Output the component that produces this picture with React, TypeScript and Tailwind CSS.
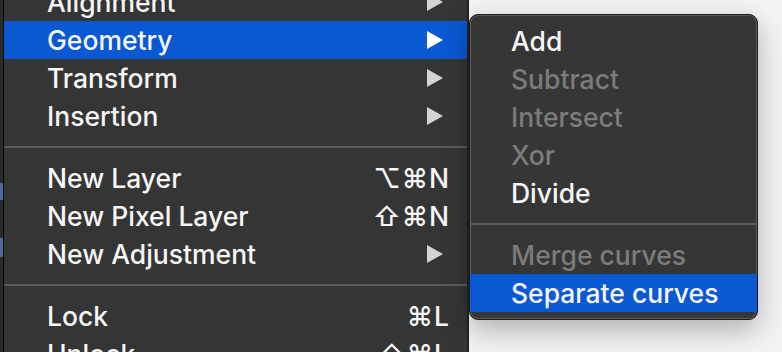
import React from "react";

type Item =
  | { kind: "item"; label: string; shortcut?: string; sub?: boolean; active?: boolean; disabled?: boolean }
  | { kind: "sep" };

const mainItems: Item[] = [
  { kind: "item", label: "Alignment", sub: true },
  { kind: "item", label: "Geometry", sub: true, active: true },
  { kind: "item", label: "Transform", sub: true },
  { kind: "item", label: "Insertion", sub: true },
  { kind: "sep" },
  { kind: "item", label: "New Layer", shortcut: "⌥⌘N" },
  { kind: "item", label: "New Pixel Layer", shortcut: "⇧⌘N" },
  { kind: "item", label: "New Adjustment", sub: true },
  { kind: "sep" },
  { kind: "item", label: "Lock", shortcut: "⌘L" },
  { kind: "item", label: "Unlock", shortcut: "⇧⌘L" },
];

const subItems: Item[] = [
  { kind: "item", label: "Add" },
  { kind: "item", label: "Subtract", disabled: true },
  { kind: "item", label: "Intersect", disabled: true },
  { kind: "item", label: "Xor", disabled: true },
  { kind: "item", label: "Divide" },
  { kind: "sep" },
  { kind: "item", label: "Merge curves", disabled: true },
  { kind: "item", label: "Separate curves", active: true },
];

const Arrow: React.FC<{ active?: boolean }> = ({ active }) => (
  <svg width="16" height="18" viewBox="0 0 16 18" className="mr-[7px]">
    <path d="M0 0 L16 9 L0 18 Z" fill={active ? "#ffffff" : "#d4d4d4"} />
  </svg>
);

const Row: React.FC<{ item: Item; pl: string }> = ({ item, pl }) => {
  if (item.kind === "sep") {
    return (
      <div className="h-[24px] flex items-center">
        <div className="h-[2px] w-full bg-[#5a5a5a]" />
      </div>
    );
  }
  return (
    <div
      className={`h-[38px] flex items-center justify-between ${pl} pr-[17px] ${
        item.active ? "bg-[#0a58d2]" : ""
      } ${item.disabled ? "text-[#7c7c7c]" : "text-[#f6f6f6]"}`}
    >
      <span>{item.label}</span>
      {item.sub && <Arrow active={item.active} />}
      {item.shortcut && <span className="tracking-[1px]">{item.shortcut}</span>}
    </div>
  );
};

export default function App() {
  return (
    <div
      className="w-[782px] h-[352px] overflow-hidden flex bg-[#f3f3f3] text-[26.5px] font-medium leading-none"
      style={{ fontFamily: "Inter, 'DejaVu Sans', sans-serif" }}
    >
      <div className="w-[3px] h-full bg-[#2c2c2c] flex flex-col">
        <div className="h-[183px]" />
        <div className="h-[17px] bg-[#4b6d9c]" />
        <div className="h-[38px]" />
        <div className="h-[19px] bg-[#4b6d9c]" />
      </div>
      <div className="w-[466px] h-full bg-[#353535] border-l border-black border-r-2 border-r-[#232323]">
        <div className="-mt-[17px]">
          {mainItems.map((it, i) => (
            <Row key={i} item={it} pl="pl-[43px]" />
          ))}
        </div>
      </div>
      <div className="flex-1 h-full">
        <div className="mt-[14px] w-[289px] rounded-[9px] bg-[#363636] overflow-hidden pt-[7px] pb-[7px] shadow-[inset_0_0_0_1px_#5c5c5c,0_10px_28px_rgba(0,0,0,0.28)] border border-[#1c1c1c]">
          {subItems.map((it, i) => (
            <Row key={i} item={it} pl="pl-[41px]" />
          ))}
        </div>
      </div>
    </div>
  );
}
